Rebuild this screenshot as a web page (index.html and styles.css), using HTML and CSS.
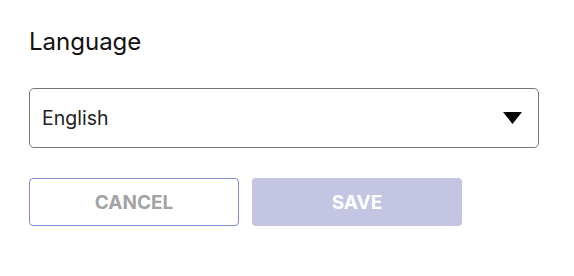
FILE: index.html
```html
<!DOCTYPE html>
<html lang="en">
<head>
<meta charset="utf-8">
<link rel="stylesheet" href="styles.css">
</head>
<body>
<div class="panel">
  <label class="field-label" for="lang">Language</label>
  <div class="select">
    <span class="select-value">English</span>
    <svg class="select-arrow" width="19" height="12" viewBox="0 0 19 12"><path d="M0 0H19L9.5 12Z" fill="#000"/></svg>
  </div>
  <div class="actions">
    <button class="btn btn-cancel">CANCEL</button>
    <button class="btn btn-save">SAVE</button>
  </div>
</div>
</body>
</html>
```
FILE: styles.css
```css
html, body {
  margin: 0;
  padding: 0;
  background: #fff;
}
body {
  font-family: "Inter", "Noto Sans", sans-serif;
  color: #111;
}
.panel {
  padding: 28px 35px 0 29px;
  display: flex;
  flex-direction: column;
}
.field-label {
  font-size: 24px;
  line-height: 28px;
  color: #111;
}
.select {
  margin-top: 32px;
  width: 510px;
  height: 60px;
  box-sizing: border-box;
  border: 1px solid #777;
  border-radius: 5px;
  display: flex;
  align-items: center;
  justify-content: space-between;
  padding: 0 16px 0 12px;
}
.select-value {
  font-size: 19.5px;
  color: #222;
}
.select-arrow {
  display: block;
}
.actions {
  margin-top: 30px;
  display: flex;
  gap: 13px;
}
.btn {
  width: 210px;
  height: 48px;
  box-sizing: border-box;
  border-radius: 4px;
  font-family: inherit;
  font-size: 19px;
  font-weight: 700;
  padding: 0;
}
.btn-cancel {
  background: #fff;
  border: 1px solid #8289cc;
  color: #a3a3a3;
}
.btn-save {
  background: #c3c5e3;
  border: none;
  color: #fff;
}
```
